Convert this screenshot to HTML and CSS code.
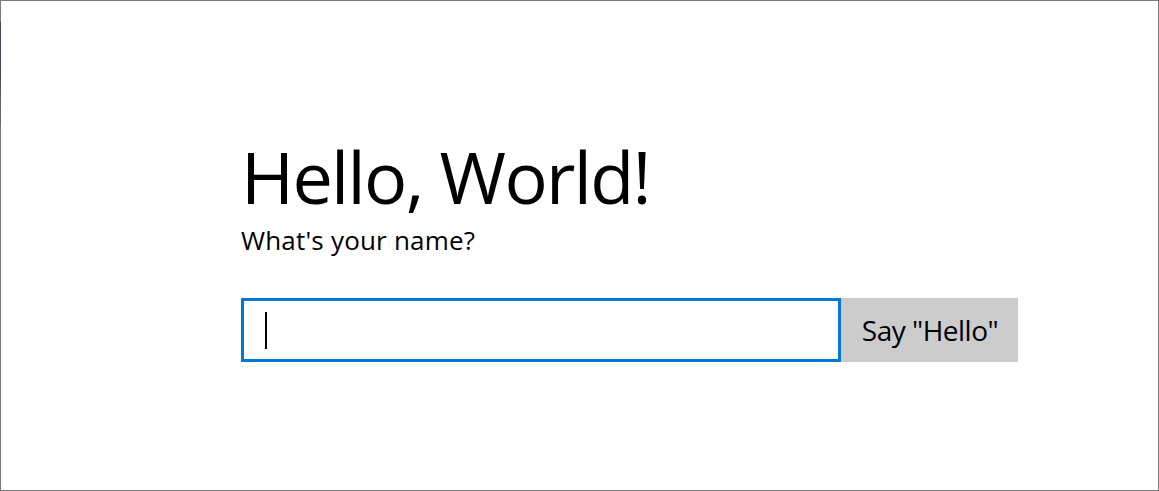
FILE: index.html
```html
<!DOCTYPE html>
<html>
<head>
<meta charset="utf-8">
<link rel="stylesheet" href="styles.css">
</head>
<body>
<div class="window">
  <main class="content">
    <h1 class="title">Hello, World!</h1>
    <p class="prompt">What's your name?</p>
    <div class="form">
      <div class="textbox"><span class="caret"></span></div>
      <button class="button">Say "Hello"</button>
    </div>
  </main>
</div>
</body>
</html>
```
FILE: styles.css
```css
* { box-sizing: border-box; }
html, body { margin: 0; padding: 0; background: #fff; overflow: hidden; }
body { font-family: "Open Sans", "Noto Sans", sans-serif; color: #000; }
.window {
  position: relative;
  width: 1159px;
  height: 491px;
  border: 1px solid #7a7a7a;
  background: #fff;
}
.window::before {
  content: "";
  position: absolute;
  left: -1px;
  top: 21px;
  width: 1px;
  height: 104px;
  background: linear-gradient(to bottom, #3d4659 0, #3d4659 50%, #5a5e66 70%, #6e6a64 100%);
}
.content {
  padding: 139px 0 0 240px;
  display: flex;
  flex-direction: column;
  align-items: flex-start;
}
.title {
  margin: 0;
  font-size: 72px;
  font-weight: 400;
  line-height: 72px;
  letter-spacing: -1.7px;
}
.prompt {
  margin: 10px 0 0 0;
  font-size: 26px;
  line-height: 36px;
  letter-spacing: 0.2px;
}
.form {
  display: flex;
  margin-top: 40px;
}
.textbox {
  width: 600px;
  height: 64px;
  border: 3px solid #0078d7;
  background: #fff;
  display: flex;
  align-items: center;
  padding-left: 21px;
}
.caret {
  display: block;
  width: 2px;
  height: 37px;
  background: #000;
}
.button {
  width: 177px;
  height: 64px;
  border: none;
  background: #cccccc;
  font-family: "Open Sans", "Noto Sans", sans-serif;
  font-size: 28px;
  letter-spacing: -0.5px;
  color: #000;
  padding: 0 0 0 1px;
}
```
